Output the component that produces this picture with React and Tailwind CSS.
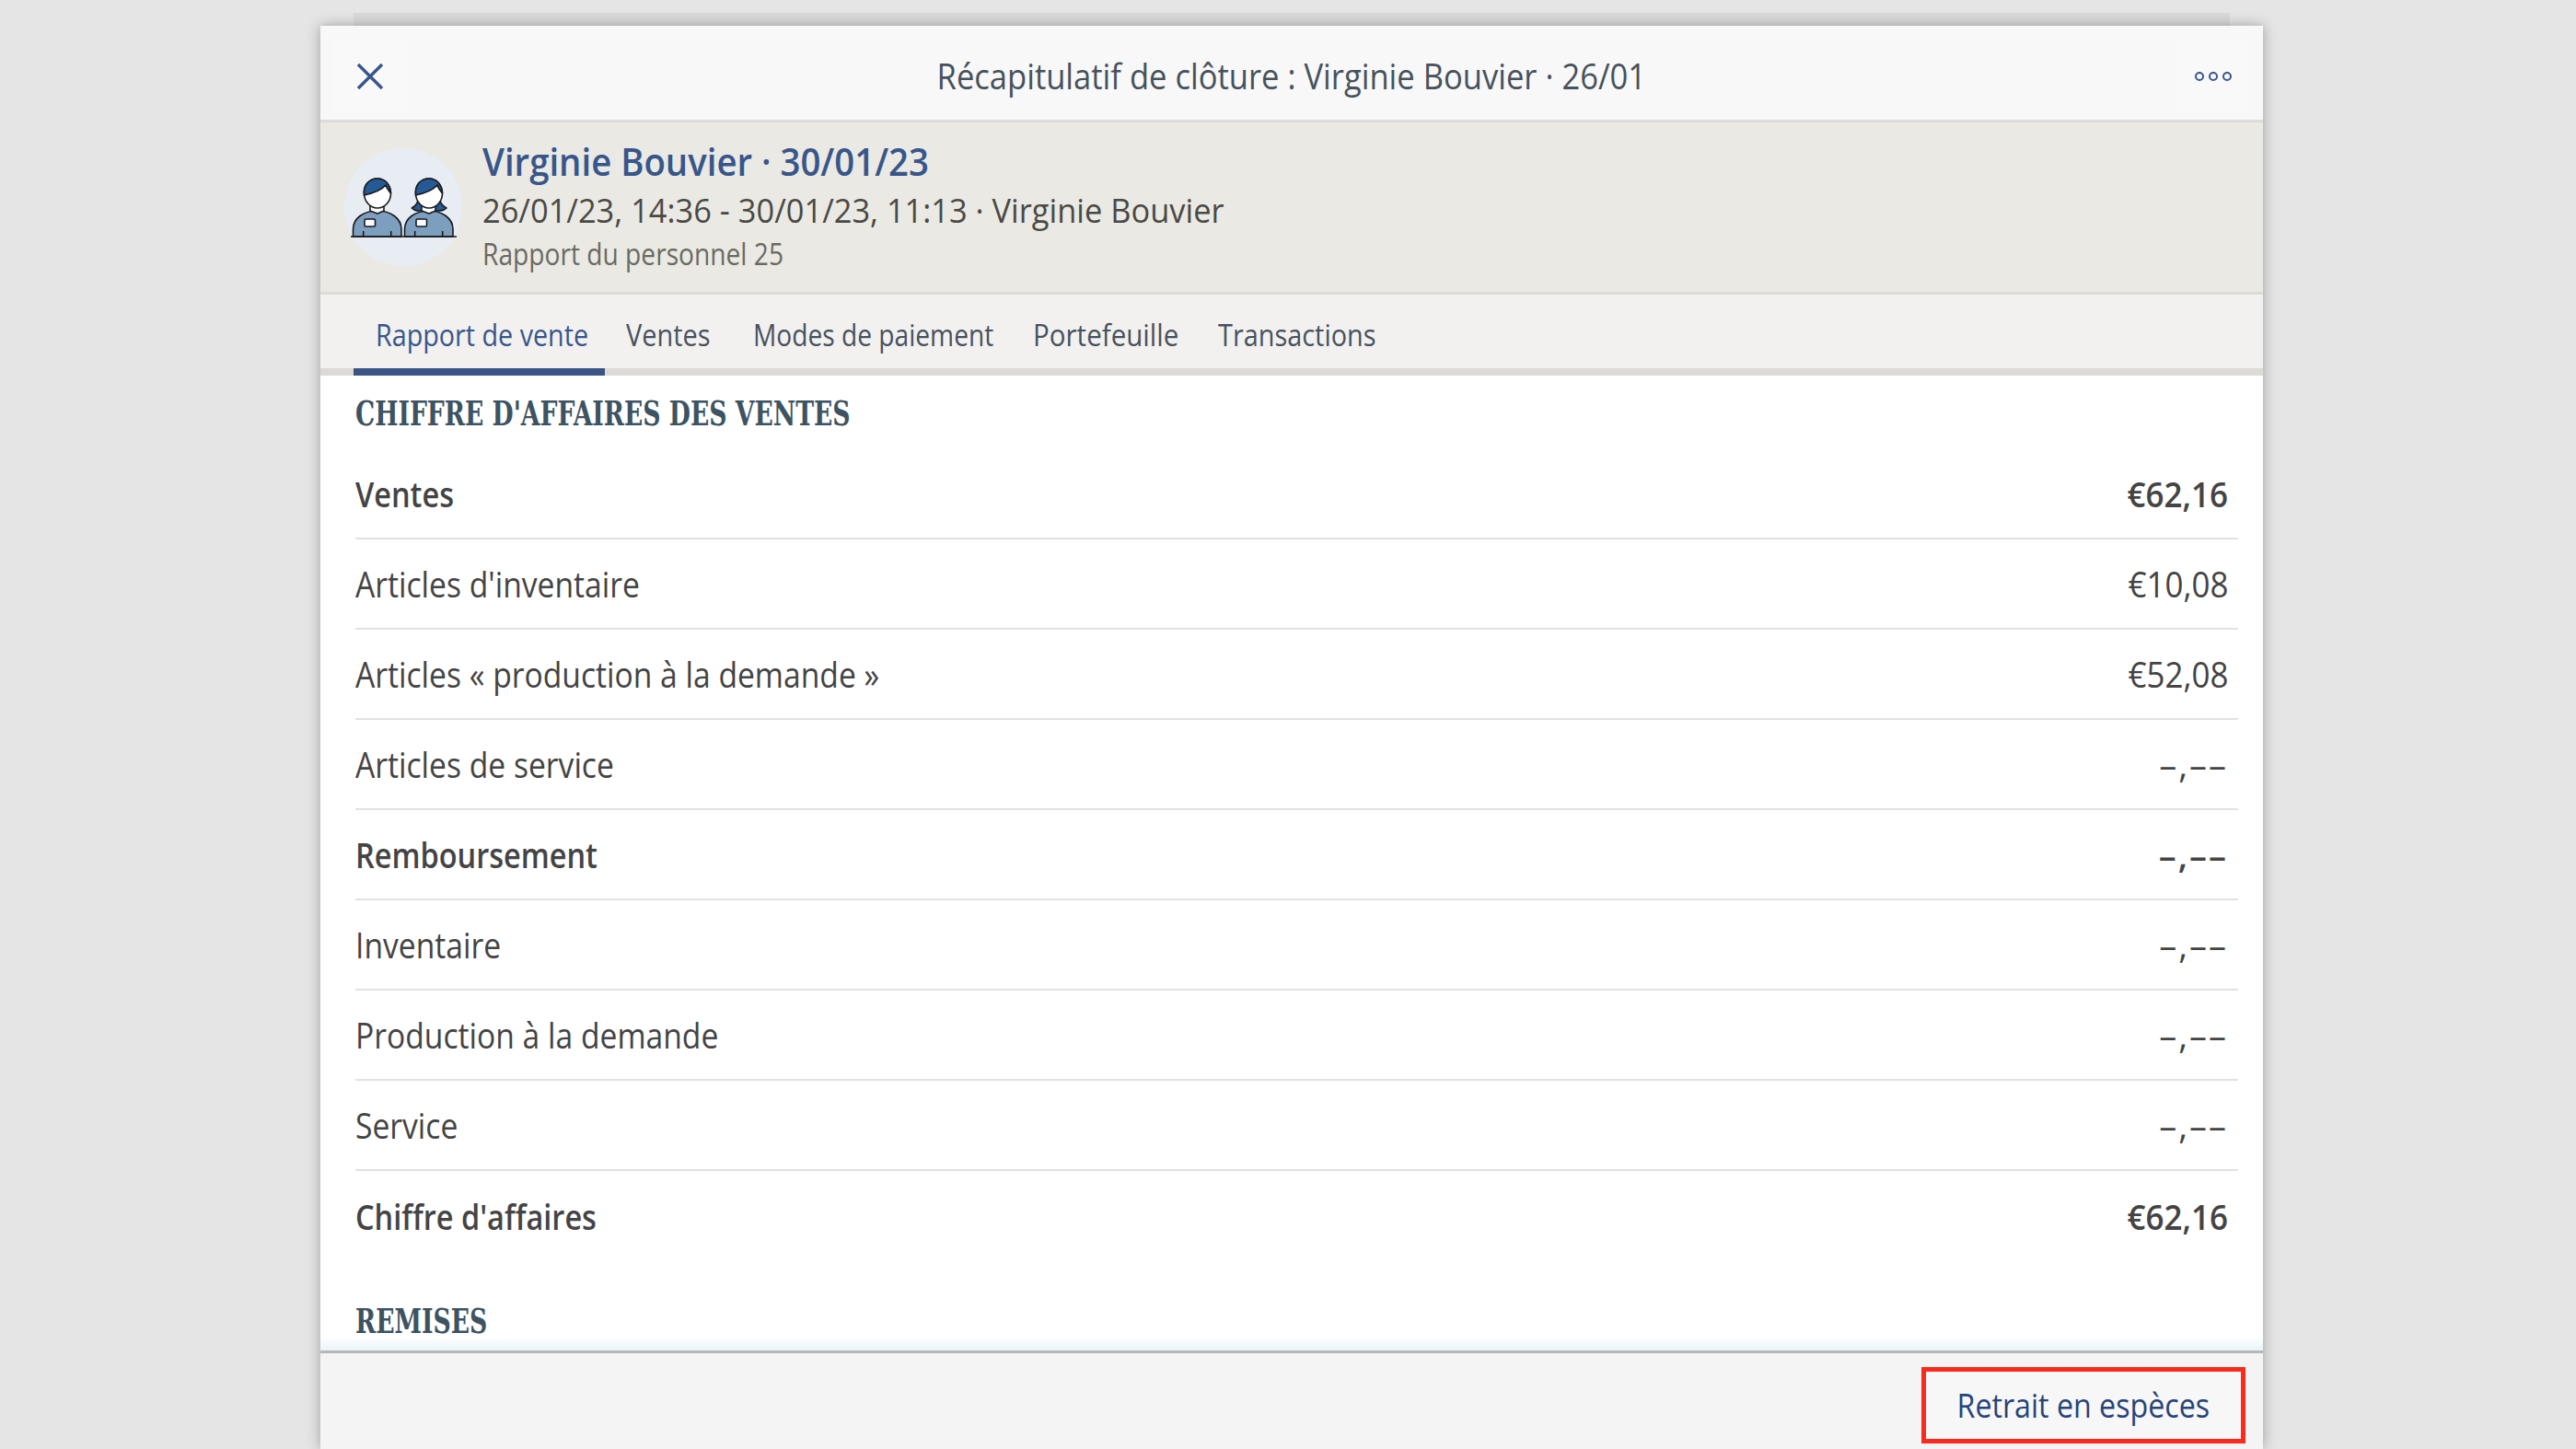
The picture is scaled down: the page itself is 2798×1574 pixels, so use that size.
import React from "react";

const rows = [
  { label: "Ventes", value: "€62,16", bold: true },
  { label: "Articles d'inventaire", value: "€10,08" },
  { label: "Articles « production à la demande »", value: "€52,08" },
  { label: "Articles de service", value: "–,––", empty: true },
  { label: "Remboursement", value: "–,––", bold: true, empty: true },
  { label: "Inventaire", value: "–,––", empty: true },
  { label: "Production à la demande", value: "–,––", empty: true },
  { label: "Service", value: "–,––", empty: true },
  { label: "Chiffre d'affaires", value: "€62,16", bold: true, last: true },
];

const tabs = [
  { label: "Ventes", w: "w-[138px]", s: "scale-x-[0.875]" },
  { label: "Modes de paiement", w: "w-[304px]", s: "scale-x-[0.853]" },
  { label: "Portefeuille", w: "w-[201px]", s: "scale-x-[0.895]" },
  { label: "Transactions", w: "w-[220px]", s: "scale-x-[0.875]" },
];

const Person = ({ x, long }) => (
  <g transform={`translate(${x} 0)`} stroke="#1a1a1a" strokeWidth="1.6" strokeLinejoin="round">
    {long && (
      <path d="M24 55 C24 60 21 63 17.3 65 C20 68 26 69 30 67 L42 67 C46 69 52 68 55 65 C51 63 48 60 48 55 Z" fill="#255a96" />
    )}
    <path d="M9.5 96 V88 C9.5 76 21 68 36 68 C50 68 62 76 62 88 V96 Z" fill="#7c9ebf" />
    <path d="M28 62 H43 V68 L36 71 L28 68 Z" fill="#fff" />
    <ellipse cx="36" cy="49" rx="14.5" ry="16" fill="#fff" />
    <path d="M21.5 51 C20 40 27 33 36 33 C44 33 50 39 50.5 49 C48 46 46 44 45 40 C40 46 31 49 21.5 51 Z" fill="#255a96" />
    <rect x="22" y="77" width="11.5" height="8" rx="1.5" fill="#fff" />
    <path d="M20.7 90 V96 M50.7 90 V96" fill="none" />
  </g>
);

const Avatar = () => (
  <div className="w-[128px] h-[128px] rounded-full bg-[#e8edf4] shrink-0">
    <svg width="128" height="128" viewBox="0 0 128 128">
      <Person x={0} />
      <Person x={56} long />
      <path d="M7 96 H122" stroke="#1a1a1a" strokeWidth="1.6" />
    </svg>
  </div>
);

export default function App() {
  return (
    <div className="h-[1574px] w-full overflow-hidden bg-[#e5e5e5] pt-[14px] font-['Open_Sans','Noto_Sans',sans-serif]">
      <div className="w-[2110px] ml-[348px] flex flex-col h-full">
        <div className="h-[14px] mx-[36px] bg-[#dadada] shrink-0" />
        <div className="flex-1 min-h-0 flex flex-col bg-white shadow-[0_0_14px_rgba(0,0,0,0.3)]">
          {/* top bar */}
          <div className="h-[105px] shrink-0 flex items-center justify-between px-[14px] pt-[8px] bg-[#f8f8f8] border-b-[3px] border-[#dcdcdc]">
            <button className="w-[80px] h-[80px] flex items-center justify-center bg-[#f9f9f9]">
              <svg width="30" height="30" viewBox="0 0 30 30">
                <path d="M2 2 L28 28 M28 2 L2 28" stroke="#38568a" strokeWidth="3.4" fill="none" />
              </svg>
            </button>
            <div className="text-[38px] pb-[2px] scale-x-[0.909] whitespace-nowrap text-[#47525c]">Récapitulatif de clôture : Virginie Bouvier · 26/01</div>
            <button className="w-[80px] h-[80px] flex items-center justify-center gap-[5px] bg-[#f9f9f9]">
              <span className="w-[10px] h-[10px] rounded-full border-2 border-[#38568a]" />
              <span className="w-[10px] h-[10px] rounded-full border-2 border-[#38568a]" />
              <span className="w-[10px] h-[10px] rounded-full border-2 border-[#38568a]" />
            </button>
          </div>

          {/* closure summary */}
          <div className="h-[187px] shrink-0 flex items-center pl-[26px] gap-[22px] bg-[#eae9e4] border-b-[3px] border-[#dcdbd4]">
            <Avatar />
            <div className="flex flex-col items-start pb-[4px]">
              <div className="text-[42px] leading-[48px] font-semibold origin-left scale-x-[0.913] text-[#38568a]">Virginie Bouvier · 30/01/23</div>
              <div className="text-[37px] leading-[58px] origin-left scale-x-[0.93] text-[#4a4a44]">26/01/23, 14:36 - 30/01/23, 11:13 · Virginie Bouvier</div>
              <div className="text-[32px] leading-[38px] origin-left scale-x-[0.88] text-[#6a6a62]">Rapport du personnel 25</div>
            </div>
          </div>

          {/* tabs */}
          <div className="h-[88px] shrink-0 flex pl-[36px] bg-[#f2f1ef] border-b-[8px] border-[#dbdad5] text-[33px] font-medium">
            <div className="w-[273px] h-[88px] flex items-center pl-[24px] pt-[8px] text-[#38568a] border-b-[8px] border-[#3a5585]">
              <span className="origin-left scale-x-[0.87] whitespace-nowrap">Rapport de vente</span>
            </div>
            {tabs.map((t) => (
              <div key={t.label} className={`${t.w} h-[80px] flex items-center pl-[23px] pt-[8px] text-[#47525f]`}>
                <span className={`origin-left ${t.s} whitespace-nowrap`}>{t.label}</span>
              </div>
            ))}
          </div>

          {/* report */}
          <div className="relative flex-1 min-h-0 overflow-hidden pl-[38px] pr-[27px]">
            <div className="h-[80px] flex items-center text-[38px] font-bold text-[#3d5361] font-['DejaVu_Serif_Condensed',serif]">
              <span className="origin-left scale-x-[0.78] whitespace-nowrap">CHIFFRE D'AFFAIRES DES VENTES</span>
            </div>
            {rows.map((r) => (
              <div
                key={r.label}
                className={`h-[98px] flex items-center justify-between pr-[11px] text-[38px] text-[#444] ${r.bold ? "font-semibold" : ""} ${r.last ? "" : "border-b-2 border-[#e2e2e2]"}`}
              >
                <span className={`origin-left whitespace-nowrap ${r.bold ? "scale-x-[0.855]" : "scale-x-[0.885]"}`}>{r.label}</span>
                <span className={r.empty ? "tracking-[2px]" : "origin-right scale-x-[0.92]"}>{r.value}</span>
              </div>
            ))}
            <div className="mt-[24px] h-[80px] flex items-center text-[38px] font-bold text-[#3d5361] font-['DejaVu_Serif_Condensed',serif]">
              <span className="origin-left scale-x-[0.78] whitespace-nowrap">REMISES</span>
            </div>
            <div className="absolute left-0 right-0 bottom-0 h-[14px] bg-gradient-to-b from-white to-[#e8f3f9]" />
          </div>

          {/* footer */}
          <div className="h-[107px] shrink-0 flex justify-end items-start pt-[15px] pr-[19px] bg-[#f4f4f4] border-t-[3px] border-[#b5b8ba]">
            <button className="w-[352px] h-[83px] flex items-center justify-center pb-[2px] bg-[#f7f7f7] border-[5px] border-[#fb2a1f] text-[37px] text-[#274478]">
              <span className="scale-x-[0.87] whitespace-nowrap">Retrait en espèces</span>
            </button>
          </div>
        </div>
      </div>
    </div>
  );
}
